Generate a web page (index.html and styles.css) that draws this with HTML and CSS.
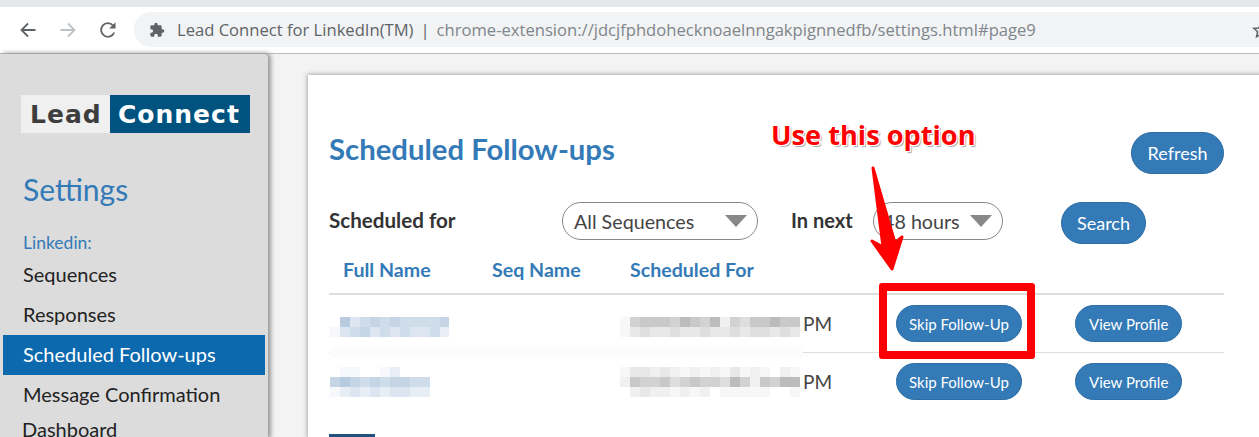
FILE: index.html
```html
<!DOCTYPE html>
<html lang="en">
<head>
    <meta charset="UTF-8">
    <title>Lead Connect for LinkedIn(TM)</title>
    <link rel="stylesheet" href="styles.css">
</head>
<body>

<!-- browser toolbar -->
<div class="strip"></div>
<div class="toolbar">
    <svg class="nav" width="18" height="18" viewBox="0 0 18 18"><path d="M16.5 9H2.5M9 2.5 2.5 9 9 15.500" fill="none" stroke="#5f6368" stroke-width="1.800"/></svg>
    <svg class="nav" width="18" height="18" viewBox="0 0 18 18"><path d="M1.500 9H15.500M9 2.500 15.500 9 9 15.500" fill="none" stroke="#bdc1c6" stroke-width="1.800"/></svg>
    <svg class="nav" width="18" height="18" viewBox="0 0 18 18"><path d="M15.200 11.500A6.800 6.800 0 1 1 14 4.500" fill="none" stroke="#5f6368" stroke-width="1.800"/><path d="M16.500 1.200V7.600H10.100Z" fill="#5f6368"/></svg>
    <div class="omnibox">
        <svg class="puzzle" width="16" height="16" viewBox="0 0 24 24"><path d="M20.500 11H19V7a2 2 0 0 0-2-2h-4V3.500a2.500 2.500 0 0 0-5 0V5H4a2 2 0 0 0-2 2v3.800h1.500a2.700 2.700 0 0 1 0 5.400H2V20a2 2 0 0 0 2 2h3.800v-1.500a2.700 2.700 0 0 1 5.400 0V22H17a2 2 0 0 0 2-2v-4h1.500a2.500 2.500 0 0 0 0-5z" fill="#5f6368"/></svg>
        <span class="ext-name">Lead Connect for LinkedIn(TM)</span>
        <span class="ext-sep">|</span>
        <span class="ext-url">chrome-extension://jdcjfphdohecknoaelnngakpignnedfb/settings.html#page9</span>
        <svg class="star" width="18" height="18" viewBox="0 0 24 24"><path d="M12 3l2.800 6.200 6.700.7-5 4.500 1.400 6.600L12 17.600 6.100 21l1.400-6.600-5-4.500 6.700-.7z" fill="none" stroke="#5f6368" stroke-width="2"/></svg>
    </div>
</div>

<div class="page">
    <!-- left menu -->
    <div class="sidebar">
        <div class="logo"><span class="logo-lead">Lead</span><span class="logo-connect">Connect</span></div>
        <h2 class="side-title">Settings</h2>
        <div class="side-group">Linkedin:</div>
        <a class="side-item">Sequences</a>
        <a class="side-item">Responses</a>
        <a class="side-item active">Scheduled Follow-ups</a>
        <a class="side-item">Message Confirmation</a>
        <a class="side-item last">Dashboard</a>
    </div>

    <div class="main">
        <div class="card">
            <div class="card-head">
                <h1>Scheduled Follow-ups</h1>
                <button class="btn btn-big btn-refresh">Refresh</button>
            </div>

            <div class="filters">
                <label class="filter-label first">Scheduled for</label>
                <div class="select select-seq">All Sequences<i class="caret"></i></div>
                <label class="filter-label next">In next</label>
                <div class="select select-hours">48 hours<i class="caret"></i></div>
                <button class="btn btn-big btn-search">Search</button>
            </div>

            <div class="thead">
                <span>Full Name</span>
                <span>Seq Name</span>
                <span>Scheduled For</span>
            </div>

            <div class="row">
                <svg class="blur" id="name1" width="120" height="20"></svg>
                <div class="when"><svg class="blur" id="date1" width="183" height="20"></svg><span class="pm">PM</span></div>
                <button class="btn btn-skip">Skip Follow-Up</button>
                <button class="btn btn-view">View Profile</button>
            </div>
            <div class="smear"></div>
            <div class="row row-second">
                <svg class="blur" id="name2" width="120" height="30"></svg>
                <div class="when"><svg class="blur" id="date2" width="183" height="30"></svg><span class="pm">PM</span></div>
                <button class="btn btn-skip">Skip Follow-Up</button>
                <button class="btn btn-view">View Profile</button>
            </div>

            <div class="pager-stub"></div>

            <!-- annotation drawn on top of the screenshot -->
            <div class="note">Use this option</div>
            <svg class="note-arrow" width="44" height="112" viewBox="0 0 44 112">
                <path d="M5 3 L15 82 L4 76 L24 104 L34 72 L27 78 Z" fill="#f00" stroke="#f00" stroke-width="3" stroke-linejoin="round"/>
            </svg>
            <div class="note-box"></div>
        </div>
    </div>
</div>

<script src="blur.js"></script>
</body>
</html>
```

FILE: styles.css
```css
* {
    box-sizing: border-box;
}
html, body {
    height: 100%;
    overflow: hidden;
}
body {
    margin: 0;
    background-color: #f3f3f3;
    font-family: Lato, "Noto Sans", sans-serif;
    color: #333;
}

/* browser chrome */
.strip {
    height: 7px;
    background-color: #e5e8eb;
}
.toolbar {
    display: flex;
    align-items: center;
    height: 47px;
    padding: 5px 0 6px 19px;
    background-color: #fff;
    border-bottom: 1px solid #bbb;
}
.nav {
    margin-right: 22px;
}
.omnibox {
    display: flex;
    align-items: center;
    flex: 1;
    height: 35px;
    margin-left: -5px;
    padding-left: 15px;
    border-radius: 17px 0 0 17px;
    background-color: #f1f3f4;
    font-family: "Open Sans", sans-serif;
    font-size: 16.600px;
    white-space: nowrap;
    overflow: hidden;
}
.puzzle {
    flex: none;
    margin-right: 12px;
}
.ext-name {
    color: #5f6368;
}
.ext-sep {
    margin: 0 7px;
    color: #5f6368;
}
.ext-url {
    color: #80868b;
}
.star {
    flex: none;
    margin-left: auto;
    margin-right: -11px;
}

/* layout */
.page {
    display: flex;
    height: 383px;
}

/* left menu */
.sidebar {
    flex: none;
    width: 268px;
    height: 383px;
    padding: 41px 3px 0;
    border-radius: 4px 4px 0 0;
    background-color: #dcdcdc;
    box-shadow: 2px 0 4px 1px #999;
    overflow: hidden;
}
.logo {
    display: flex;
    width: 229px;
    height: 38px;
    margin-left: 18px;
    font-family: "DejaVu Sans", sans-serif;
    font-size: 25px;
    font-weight: bold;
    line-height: 39px;
    letter-spacing: 1px;
}
.logo-lead {
    width: 89px;
    padding-left: 9px;
    background-color: #f0f0f0;
    color: #3d3d3d;
}
.logo-connect {
    flex: 1;
    padding-left: 8px;
    background-color: #00527f;
    color: #fff;
}
.side-title {
    margin: 36px 0 0 20px;
    color: #337ab7;
    font-size: 30px;
    font-weight: normal;
    line-height: 40px;
}
.side-group {
    margin: 24px 0 0 20px;
    color: #337ab7;
    font-size: 17.500px;
    line-height: 20px;
}
.side-item {
    display: block;
    height: 40px;
    padding-left: 20px;
    color: #222;
    font-size: 20px;
    line-height: 38px;
}
.side-group + .side-item {
    margin-top: 2px;
}
.side-item.active {
    background-color: #0c69ae;
    color: #fff;
}
.side-item.last {
    margin-top: -5px;
    padding-left: 19px;
}

/* content card */
.main {
    flex: 1;
    padding: 21px 0 0 40px;
}
.card {
    position: relative;
    width: 980px;
    height: 362px;
    padding: 0 0 0 21px;
    background-color: #fff;
    box-shadow: 0 0 4px 1px #aaa;
}
.card-head {
    display: flex;
    justify-content: space-between;
    width: 895px;
    padding-top: 57px;
}
.card-head h1 {
    margin: -1px 0 0;
    color: #337ab7;
    font-size: 29.300px;
    font-weight: 700;
    line-height: 36px;
}
.btn {
    height: 37px;
    padding: 0 12px;
    border: 1px solid #2e6da4;
    border-radius: 19px;
    background-color: #337ab7;
    color: #fff;
    font-family: Lato, sans-serif;
    font-size: 15px;
}
.btn-view {
    padding: 0 13px;
}
.btn-big {
    height: 42px;
    padding: 0 15px;
    border-radius: 21px;
    font-size: 18px;
}
.btn-refresh {
    padding: 0 15.500px;
}

.filters {
    display: flex;
    align-items: flex-start;
    margin-top: 28px;
}
.filter-label {
    color: #333;
    font-size: 20px;
    font-weight: 700;
    line-height: 36px;
}
.filter-label.first {
    width: 233px;
    font-size: 20.600px;
}
.filter-label.next {
    width: 82px;
    margin-left: 33px;
}
.select {
    display: flex;
    align-items: center;
    justify-content: space-between;
    height: 38px;
    padding: 0 10px 0 11px;
    border: 1px solid #888;
    border-radius: 19px;
    color: #444;
    font-size: 19.700px;
}
.select-seq {
    width: 196px;
}
.select-hours {
    width: 130px;
    padding-left: 9px;
}
.caret {
    width: 0;
    height: 0;
    border-left: 11px solid transparent;
    border-right: 11px solid transparent;
    border-top: 12px solid #888;
}
.btn-search {
    margin-left: 58px;
}

.thead {
    display: grid;
    grid-template-columns: 149px 138px auto;
    justify-content: start;
    width: 895px;
    height: 44px;
    margin-top: 7px;
    padding: 5px 0 0 14px;
    border-bottom: 2px solid #ddd;
    color: #337ab7;
    font-size: 19.600px;
    font-weight: 700;
    line-height: 28px;
}

.row {
    display: grid;
    grid-template-columns: 291px 276px 179px auto;
    justify-content: start;
    align-items: center;
    width: 895px;
    height: 57px;
}
.row .btn-skip {
    justify-self: start;
}
.row .blur {
    display: block;
    margin-top: 7px;
}
.row-second {
    border-top: 1px solid #ddd;
}
.row-second .blur {
    margin-top: 2px;
}
.row-second .btn {
    margin-top: 1px;
}
.when {
    display: flex;
    align-items: center;
}
.pm {
    color: #444;
    font-size: 19px;
}
/* the censoring smudge hides the row line under it */
.smear {
    position: relative;
    z-index: 1;
    width: 473px;
    height: 10px;
    margin: -5px 0 -5px 1px;
    background-color: #fcfcfc;
}
.pager-stub {
    width: 46px;
    height: 3px;
    margin-top: 25px;
    background-color: #23527c;
}

/* annotation */
.note {
    position: absolute;
    left: 463px;
    top: 41px;
    color: #f00;
    font-family: "Open Sans", sans-serif;
    font-size: 27.200px;
    font-weight: 700;
    line-height: 38px;
    white-space: nowrap;
    text-shadow: 1px 1px 0 #fff, -1px -1px 0 #fff, 1px -1px 0 #fff, -1px 1px 0 #fff, 2px 2px 1px #aaa;
}
.note-arrow {
    position: absolute;
    left: 560px;
    top: 90px;
    z-index: 2;
}
.note-box {
    position: absolute;
    left: 571px;
    top: 208px;
    z-index: 2;
    width: 156px;
    height: 76px;
    border: 8px solid #f00;
    border-radius: 3px;
}
```

FILE: blur.js
```js
// pixelated (censored) cells of the table, one letter per 10px cell
var blue = {a:'#fff',b:'#f6f8fb',c:'#e8eef5',d:'#dce5f0',e:'#cfdcea',f:'#c6d5e6',g:'#b6cbe0'};
var grey = {a:'#fff',b:'#f7f7f7',c:'#f0f0f0',d:'#e8e8e8',e:'#dedede',f:'#d2d2d2',g:'#c9c9c9',h:'#bcbcbc'};
var cells = {
    name1: [blue, 'agdefefeeeef', 'bdefdededdec'],
    name2: [blue, 'abbaabcaaa', 'fgfefeffee', 'bcdcdcddcc'],
    date1: [grey, 'bfgggfhgfhcfegghgg', 'bdeddeddeddedeeded'],
    date2: [grey, 'bddcdcbcbcbdbcbacb', 'cgffgefgffehfcgfhh', 'acdccbcbcabbbbbaab']
};
for (var id in cells) {
    var svg = document.getElementById(id);
    var map = cells[id][0];
    cells[id].slice(1).forEach(function (row, y) {
        row.split('').forEach(function (c, x) {
            var r = document.createElementNS('http://www.w3.org/2000/svg', 'rect');
            r.setAttribute('x', x * 10 + (id.indexOf('date') === 0 ? 0 : 1));
            r.setAttribute('y', y * 10);
            r.setAttribute('width', 10);
            r.setAttribute('height', 10);
            r.setAttribute('fill', map[c]);
            svg.appendChild(r);
        });
    });
}
```
